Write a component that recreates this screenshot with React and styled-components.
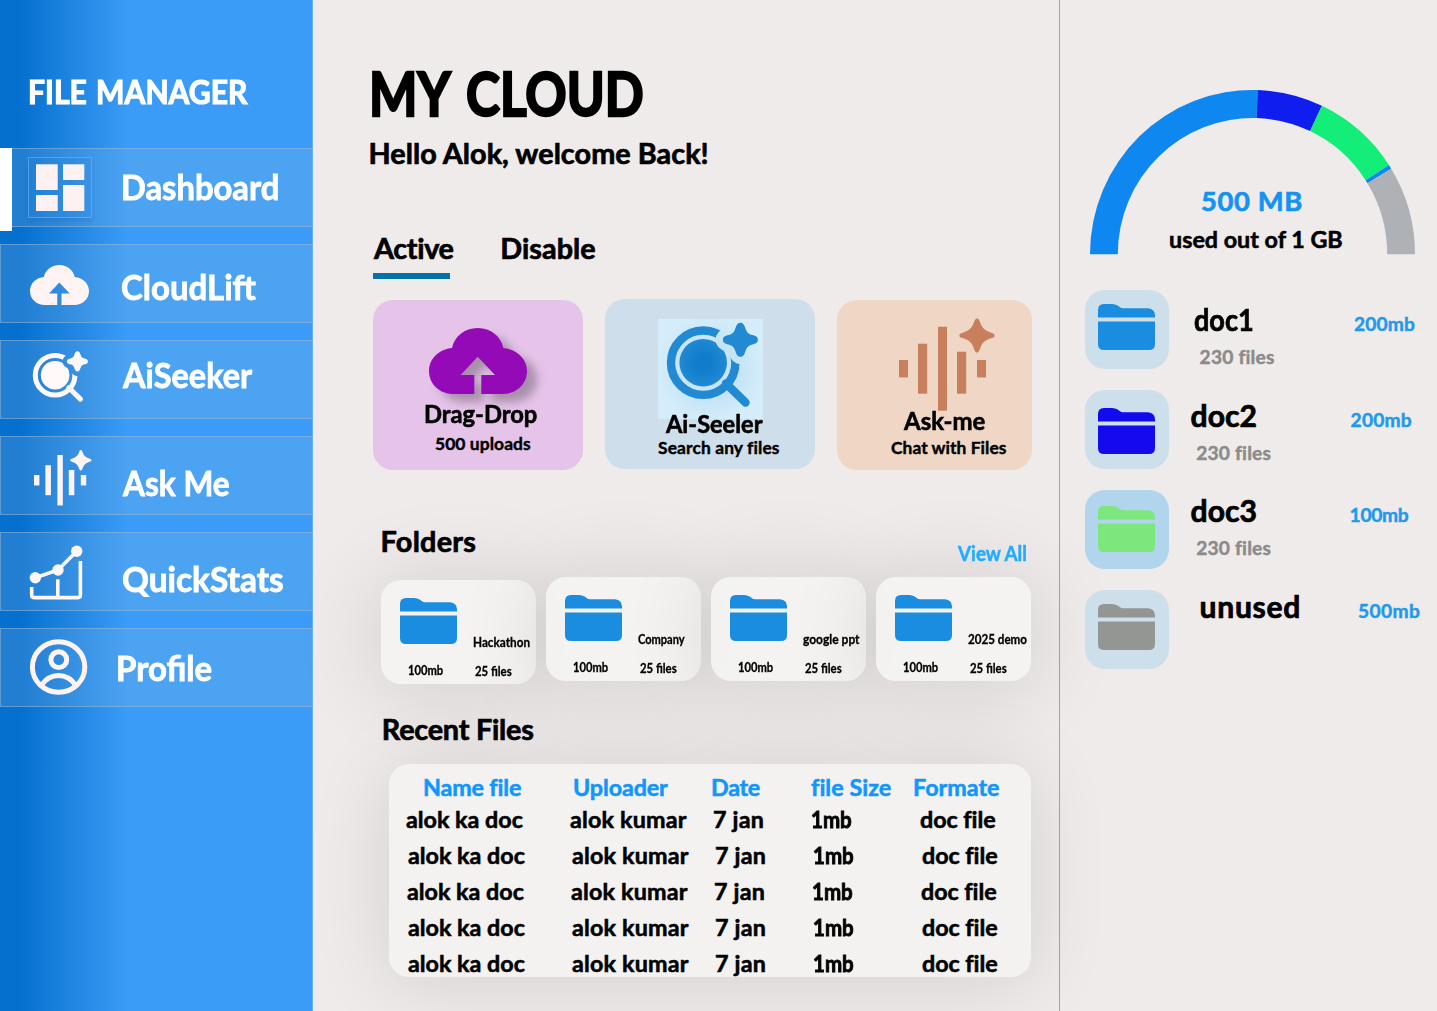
import React from "react";
import styled, { createGlobalStyle } from "styled-components";

const GlobalStyle = createGlobalStyle`
  *, *::before, *::after { box-sizing: border-box; }
  body {
    margin: 0;
    background: #efebea;
    color: #000;
    font-family: Lato, "Open Sans", sans-serif;
    font-weight: 700;
  }
`;

const Page = styled.div`
  display: flex;
  width: 1437px;
  height: 1011px;
  overflow: hidden;
`;

/* One line of text; the line box is exactly as tall as the font size. */
const Text = styled.span`
  display: block;
  flex: none;
  font-size: ${(p) => p.$size}px;
  line-height: 1;
  white-space: nowrap;
  color: ${(p) => p.$color || "inherit"};
  letter-spacing: ${(p) => p.$track || 0}px;
  word-spacing: ${(p) => p.$gap || 0}px;
  padding-top: 1px;
  margin: ${(p) => p.$top || 0}px 0 -1px ${(p) => p.$left || 0}px;
  transform: ${(p) => (p.$squeeze ? `scaleX(${p.$squeeze})` : "none")};
  transform-origin: left center;
  -webkit-text-stroke: ${(p) => p.$stroke || 0.024}em currentColor;
`;

/* ---------- icons ---------- */

const Svg = styled.svg`
  display: block;
  flex: none;
  overflow: visible;
`;

const CLOUD =
  "M24.5 66C11 66 0 56.5 0 43C0 30.5 10.5 21 23 20C25.5 8.5 35.5 0 48.7 0C62 0 72 8.5 74.3 20C87 21 98 30.5 98 43C98 56.5 87 66 73.5 66H52.3V47H66L48.7 28.7L31.7 47H45.3V66Z";
const STAR_ROUND =
  "M0-17C3-17 4-14.5 5-11.5C6.2-7.5 8-5.7 12-4.7C15-3.9 17.5-3 17.5 0C17.5 3 15 3.9 12 4.7C8 5.7 6.2 7.5 5 11.5C4 14.5 3 17 0 17C-3 17-4 14.5-5 11.5C-6.2 7.5-8 5.7-12 4.7C-15 3.9-17.5 3-17.5 0C-17.5-3-15-3.9-12-4.7C-8-5.7-6.2-7.5-5-11.5C-4-14.5-3-17 0-17Z";
const STAR_SHARP =
  "M0-17C2-17 2.5-14.5 3.5-12C5.7-7 8-5 13-3.2C15.5-2.3 17.7-1.8 17.7 0C17.7 1.8 15.5 2.3 13 3.2C8 5 5.7 7 3.5 12C2.5 14.5 2 17 0 17C-2 17-2.5 14.5-3.5 12C-5.7 7-8 5-13 3.2C-15.5 2.3-17.7 1.8-17.7 0C-17.7-1.8-15.5-2.3-13-3.2C-8-5-5.7-7-3.5-12C-2.5-14.5-2-17 0-17Z";

const DashboardIcon = () => (
  <Svg width="62" height="59" viewBox="1 1 62 59" fill="#fdf2f1">
    <rect x="8" y="7.3" width="21.7" height="25.7" />
    <rect x="35" y="7.3" width="21.3" height="15.7" />
    <rect x="8" y="38" width="21.7" height="16" />
    <rect x="35" y="28" width="21.3" height="26" />
  </Svg>
);

const CloudIcon = ({ width, height, color }) => (
  <Svg width={width} height={height} viewBox="0 0 98 66" preserveAspectRatio="none">
    <path d={CLOUD} fill={color} />
  </Svg>
);

const SeekIcon = ({ id, width, height, color, disc, halo, ring = 32.2 }) => (
  <Svg width={width} height={height} viewBox="0 0 105 100">
    <defs>
      <mask id={id} maskUnits="userSpaceOnUse" x="0" y="0" width="105" height="100">
        <rect width="105" height="100" fill="#fff" />
        <path d={STAR_ROUND} transform="translate(82.7 20.7)" fill="#000" stroke="#000" strokeWidth="15" strokeLinejoin="round" />
      </mask>
      <radialGradient id={`${id}-disc`}>
        <stop offset="0.3" stopColor={disc} />
        <stop offset="1" stopColor={color} />
      </radialGradient>
    </defs>
    <g mask={`url(#${id})`}>
      {halo && <circle cx="45.2" cy="43.7" r="29" fill={halo} />}
      <circle cx="45.2" cy="43.7" r={ring} fill="none" stroke={color} strokeWidth="8.4" />
      <circle cx="45.2" cy="43.7" r="23.8" fill={`url(#${id}-disc)`} />
    </g>
    <path d="M68 64.5L87.5 83.5" stroke={color} strokeWidth="8.4" strokeLinecap="round" />
    <path d={STAR_ROUND} transform="translate(82.4 20.7)" fill={color} />
  </Svg>
);

const VoiceIcon = ({ width, height, color }) => (
  <Svg width={width} height={height} viewBox="0 0 105 100" fill={color}>
    <rect x="10" y="50" width="9" height="17.4" />
    <rect x="29" y="33.7" width="9.2" height="50" />
    <rect x="49" y="16.7" width="9" height="84" />
    <rect x="68" y="41.7" width="9.2" height="42" />
    <rect x="88" y="50" width="9" height="17.4" />
    <path d={STAR_SHARP} transform="translate(88 25.4)" />
  </Svg>
);

const StatsIcon = () => (
  <Svg width="64" height="61" viewBox="0 0 64 61" fill="none" stroke="#fff7f6" strokeWidth="3.6">
    <path d="M3.7 46V54Q3.7 56.6 6 56.6H50Q52.4 56.6 52.4 54V20M29.8 38.3V56" />
    <path d="M7.3 36.7L30 29L48.7 10.3" />
    <g fill="#fff7f6" stroke="none">
      <circle cx="7.3" cy="36.7" r="5.7" />
      <circle cx="30" cy="29" r="5.7" />
      <circle cx="48.7" cy="10.3" r="5.7" />
    </g>
  </Svg>
);

const ProfileIcon = () => (
  <Svg width="64" height="61" viewBox="0 0 64 61" fill="none" stroke="#fff4f3" strokeWidth="5">
    <ellipse cx="30.6" cy="30" rx="26.2" ry="25.3" />
    <circle cx="30.8" cy="22.7" r="7.9" />
    <path d="M13.5 48.3C22 35.2 39 35.2 47.7 48.3" />
  </Svg>
);

const FolderIcon = ({ color }) => (
  <Svg width="57" height="46" viewBox="0 0 57 46" fill={color}>
    <path d="M0 13.6V6Q0 0 6 0H14Q17.3 0 19.6 1.6L22 3.3Q23.2 4.2 25 4.2H50Q57 5 57 11.2V13.6Z" />
    <path d="M0 17.6H57V40Q57 46 51 46H6Q0 46 0 40Z" />
  </Svg>
);

/* ---------- sidebar ---------- */

const Sidebar = styled.aside`
  flex: none;
  width: 313px;
  padding-top: 75px;
  border-right: 1px solid #66b0f5;
  background: linear-gradient(90deg, #0670cf 0, #0670cf 20px, #3a9cf6 128px);
  color: #fff;
`;

const Nav = styled.nav`
  display: flex;
  flex-direction: column;
  gap: 17px;
  margin-top: 40px;
`;

const NavItem = styled.a`
  position: relative;
  display: flex;
  align-items: flex-start;
  height: 79px;
  padding-left: 27px;
  background: rgba(172, 199, 224, 0.16);
  border: 1px solid rgba(160, 185, 210, 0.5);
  border-right: 0;

  &::before {
    content: "";
    display: ${(p) => (p.$active ? "block" : "none")};
    position: absolute;
    left: -1px;
    top: -1px;
    width: 12px;
    height: 83px;
    background: #fff;
  }
`;

const IconSlot = styled.span`
  flex: none;
  width: 64px;
  height: 61px;
  margin-top: 8px;
  padding: ${(p) => p.$pad || "0"};
  ${(p) =>
    p.$framed &&
    `border: 1px solid rgba(120, 185, 245, 0.55);
     background: rgba(10, 110, 200, 0.08);
     box-shadow: 0 4px 5px rgba(0, 40, 100, 0.12);`}
`;

const NAV = [
  { label: "Dashboard", top: 20, squeeze: 0.957, icon: <DashboardIcon />, framed: true, active: true },
  { label: "CloudLift", top: 23.6, squeeze: 0.965, icon: <CloudIcon width={59} height={40} color="#fff4f3" />, pad: "12px 0 0 2px" },
  { label: "AiSeeker", top: 15.6, squeeze: 0.95, left: 31, icon: <SeekIcon id="seek-nav" width={63} height={60} ring={33} color="#fffaf9" disc="#fffaf9" /> },
  { label: "Ask Me", top: 27.6, squeeze: 0.925, left: 31, icon: <VoiceIcon width={63} height={60} color="#fff4f3" /> },
  { label: "QuickStats", top: 27.6, squeeze: 0.976, left: 30, icon: <StatsIcon /> },
  { label: "Profile", top: 20.6, squeeze: 0.964, left: 24, icon: <ProfileIcon /> },
];

/* ---------- main column ---------- */

const Main = styled.main`
  flex: none;
  width: 747px;
  padding: 61.5px 0 0 55px;
  border-right: 1px solid #a5a2a2;
`;

const Tabs = styled.div`
  display: flex;
  gap: 46.5px;
  margin: 66.2px 0 0 6px;
`;

const TabLine = styled.div`
  width: 77px;
  height: 6px;
  margin: 10.7px 0 0 5px;
  background: #0571ab;
`;

const Actions = styled.div`
  display: flex;
  gap: 22px;
  margin: 21px 0 0 5px;
`;

const ActionCard = styled.article`
  flex: none;
  width: ${(p) => p.$width || 210}px;
  height: 170px;
  margin-top: ${(p) => p.$lift || 0}px;
  padding: ${(p) => p.$pad};
  border-radius: 20px;
  background: ${(p) => p.$bg};
`;

const CloudArt = styled.div`
  margin-left: 12px;
  filter: drop-shadow(10px 8px 5px rgba(0, 0, 0, 0.27));
`;

const SeekArt = styled.div`
  width: 105px;
  height: 100px;
  background: radial-gradient(circle, #c3e3f6 35%, #d5edfa 75%);
`;

const SectionHead = styled.div`
  display: flex;
  justify-content: space-between;
  align-items: flex-start;
  height: 28.8px;
  margin: ${(p) => p.$top}px 30px 0 ${(p) => p.$left}px;
`;

const ViewAll = styled.a`
  width: 71px;
`;

const FolderRow = styled.div`
  display: flex;
  gap: 10px;
  height: 107px;
  margin: 21.7px 0 0 13px;
`;

const FolderCard = styled.article`
  flex: none;
  width: 155px;
  height: 104px;
  margin-top: ${(p) => p.$drop || 0}px;
  padding: 18.3px 0 0 19px;
  border-radius: 20px;
  background: rgba(245, 244, 242, 0.86);
  box-shadow: 0 4px 90px rgba(0, 0, 0, 0.14);
`;

const FolderTop = styled.div`
  display: flex;
  height: 46px;
`;

const FolderMeta = styled.div`
  display: grid;
  grid-template-columns: 67px 1fr;
  margin: 19.6px 0 0 7.5px;
`;

const FOLDERS = [
  { name: "Hackathon", squeeze: 0.955, drop: 3 },
  { name: "Company", squeeze: 0.9 },
  { name: "google ppt", squeeze: 0.975 },
  { name: "2025 demo", squeeze: 0.945 },
];

const Table = styled.section`
  width: 642px;
  height: 213px;
  margin: 20.7px 0 0 21px;
  padding-top: 11.3px;
  border-radius: 20px;
  background: #f3f2f0;
  box-shadow: 0 4px 80px rgba(0, 0, 0, 0.12);
`;

const HeadRow = styled.div`
  display: grid;
  grid-template-columns: 150px 138px 100px 102px 1fr;
  height: 32px;
  padding-left: 34px;
  color: #1196fc;
`;

const FileRow = styled.div`
  display: grid;
  grid-template-columns: 164px 143px 98px 109px 1fr;
  height: 36px;
  padding-left: ${(p) => 17 + p.$shift}px;
`;

/* ---------- storage panel ---------- */

const Panel = styled.aside`
  flex: none;
  width: 377px;
  padding: 90px 0 0 25px;
`;

const Gauge = styled.div`
  display: grid;
  width: 325px;
  height: 164.3px;
  margin-left: 5px;

  > * { grid-area: 1 / 1; }
`;

const GaugeText = styled.div`
  padding: 95.7px 0 0 79px;
`;

const DocList = styled.div`
  display: flex;
  flex-direction: column;
  gap: 21px;
  margin-top: 35.7px;
`;

const Doc = styled.article`
  display: flex;
  align-items: flex-start;
  height: 79px;
`;

const Tile = styled.div`
  flex: none;
  width: 84px;
  height: 79px;
  padding: ${(p) => p.$top}px 0 0 13px;
  border-radius: 20px;
  background: ${(p) => p.$bg || "#cddfeb"};
`;

const DocInfo = styled.div`
  flex: none;
  width: 160px;
  margin: ${(p) => p.$top}px 0 0 ${(p) => p.$left}px;
`;

const DOCS = [
  { name: "doc1", squeeze: 0.9, files: "230 files", size: "200mb", top: 13.3, left: 25, iconTop: 14, color: "#1b8de0" },
  { name: "doc2", files: "230 files", size: "200mb", top: 9.3, left: 21.6, iconTop: 18, color: "#130bee" },
  { name: "doc3", files: "230 files", size: "100mb", top: 4.3, left: 21.6, iconTop: 16, color: "#7de67c", bg: "#b1d5ec", sizeTrack: -0.34, nudge: -1 },
  { name: "unused", track: 0.7, size: "500mb", top: 0.3, left: 30.6, iconTop: 14, color: "#949694", sizeTrack: 0.4, nudge: -1.6 },
];

const SEGMENTS = [
  { from: -90, to: 1.8, color: "#0f87f0" },
  { from: 1.8, to: 25.3, color: "#0f1dee" },
  { from: 25.3, to: 57.1, color: "#12ee77" },
  { from: 57.1, to: 58.6, color: "#0f87f0" },
  { from: 58.6, to: 90, color: "#aeb2b7" },
];

/* Ring sector between two angles, measured clockwise from the top. */
function sector(from, to) {
  const at = (deg, rx, ry) => {
    const a = (deg * Math.PI) / 180;
    return `${162.5 + rx * Math.sin(a)} ${164.3 - ry * Math.cos(a)}`;
  };
  return `M${at(from, 162.5, 164.3)}A162.5 164.3 0 0 1 ${at(to, 162.5, 164.3)}L${at(to, 134.7, 136.3)}A134.7 136.3 0 0 0 ${at(from, 134.7, 136.3)}Z`;
}

export default function App() {
  return (
    <Page>
      <GlobalStyle />
      <Sidebar>
        <Text $size={32.9} $left={27.6} $squeeze={0.915} $gap={2} $stroke={0.035}>FILE MANAGER</Text>
        <Nav>
          {NAV.map((n) => (
            <NavItem key={n.label} $active={n.active}>
              <IconSlot $framed={n.framed} $pad={n.pad}>{n.icon}</IconSlot>
              <Text $size={34.2} $top={n.top} $left={n.left || 29} $squeeze={n.squeeze}>{n.label}</Text>
            </NavItem>
          ))}
        </Nav>
      </Sidebar>

      <Main>
        <Text $size={60.3} $left={0.8} $squeeze={0.85} $gap={6} $stroke={0.04}>MY CLOUD</Text>
        <Text $size={28.8} $left={0.5} $top={16.7} $track={0.05}>Hello Alok, welcome Back!</Text>
        <Tabs>
          <Text $size={28.8} $track={-0.33}>Active</Text>
          <Text $size={28.8} $track={0.07}>Disable</Text>
        </Tabs>
        <TabLine />

        <Actions>
          <ActionCard $bg="#e6c4ea" $pad="28.3px 0 0 44px">
            <CloudArt><CloudIcon width={98} height={66} color="#930ab6" /></CloudArt>
            <Text $size={24.7} $top={7.2} $left={7} $squeeze={0.96}>Drag-Drop</Text>
            <Text $size={17.4} $top={7.4} $left={18} $track={0.09}>500 uploads</Text>
          </ActionCard>
          <ActionCard $bg="#cedfeb" $pad="20px 0 0 53px" $lift={-1}>
            <SeekArt><SeekIcon id="seek-card" width={105} height={100} color="#2289d3" disc="#107ccb" halo="#c8e5f7" /></SeekArt>
            <Text $size={24.7} $top={-7.5} $left={7.5} $squeeze={0.955}>Ai-Seeler</Text>
            <Text $size={17.4} $top={1.4} $track={0.13}>Search any files</Text>
          </ActionCard>
          <ActionCard $bg="#efd6c5" $pad="10.3px 0 0 52px" $width={195}>
            <VoiceIcon width={105} height={100} color="#c8805c" />
            <Text $size={24.7} $top={-1.8} $left={14.5} $squeeze={0.97}>Ask-me</Text>
            <Text $size={17.4} $top={4.4} $left={2} $track={0.05}>Chat with Files</Text>
          </ActionCard>
        </Actions>

        <SectionHead $top={56.5} $left={12.6}>
          <Text $size={28.8} $track={0.25}>Folders</Text>
          <ViewAll><Text $size={20.5} $top={15.3} $squeeze={0.92} $color="#22acfd">View All</Text></ViewAll>
        </SectionHead>
        <FolderRow>
          {FOLDERS.map((f) => (
            <FolderCard key={f.name} $drop={f.drop}>
              <FolderTop>
                <FolderIcon color="#1b8de0" />
                <Text $size={12.3} $top={37.5} $left={16} $squeeze={f.squeeze}>{f.name}</Text>
              </FolderTop>
              <FolderMeta>
                <Text $size={12.3} $squeeze={0.91}>100mb</Text>
                <Text $size={12.3} $top={1} $squeeze={0.925}>25 files</Text>
              </FolderMeta>
            </FolderCard>
          ))}
        </FolderRow>

        <SectionHead $top={30.5} $left={13.8}>
          <Text $size={28.8} $track={-0.22}>Recent Files</Text>
        </SectionHead>
        <Table>
          <HeadRow>
            <Text $size={23.3} $track={-0.15}>Name file</Text>
            <Text $size={23.3} $track={-0.1}>Uploader</Text>
            <Text $size={23.3} $track={-0.3}>Date</Text>
            <Text $size={23.3} $track={0.05}>file Size</Text>
            <Text $size={23.3}>Formate</Text>
          </HeadRow>
          {[0, 2, 1, 2, 2].map((shift, i) => (
            <FileRow key={i} $shift={shift}>
              <Text $size={23.3}>alok ka doc</Text>
              <Text $size={23.3} $track={0.2}>alok kumar</Text>
              <Text $size={23.3} $track={0.2}>7 jan</Text>
              <Text $size={23.3} $squeeze={0.88} $stroke={0.04}>1mb</Text>
              <Text $size={23.3} $track={-0.05}>doc file</Text>
            </FileRow>
          ))}
        </Table>
      </Main>

      <Panel>
        <Gauge>
          <Svg width="325" height="164.3" viewBox="0 0 325 164.3">
            {SEGMENTS.map((s) => (
              <path key={s.from} d={sector(s.from, s.to)} fill={s.color} />
            ))}
          </Svg>
          <GaugeText>
            <Text $size={27.4} $left={32} $track={0.6} $color="#1393f2">500 MB</Text>
            <Text $size={23.3} $top={14.2}>used out of 1 GB</Text>
          </GaugeText>
        </Gauge>
        <DocList>
          {DOCS.map((d) => (
            <Doc key={d.name}>
              <Tile $top={d.iconTop} $bg={d.bg}><FolderIcon color={d.color} /></Tile>
              <DocInfo $top={d.top} $left={d.left}>
                <Text $size={30.1} $track={d.track} $squeeze={d.squeeze}>{d.name}</Text>
                {d.files && <Text $size={19.2} $top={12.6} $left={5.6} $track={0.19} $color="#8b8b8b">{d.files}</Text>}
              </DocInfo>
              <Text $size={19.2} $top={d.top + 9.7} $left={d.nudge} $track={d.sizeTrack || 0.16} $color="#1f9aea">{d.size}</Text>
            </Doc>
          ))}
        </DocList>
      </Panel>
    </Page>
  );
}
